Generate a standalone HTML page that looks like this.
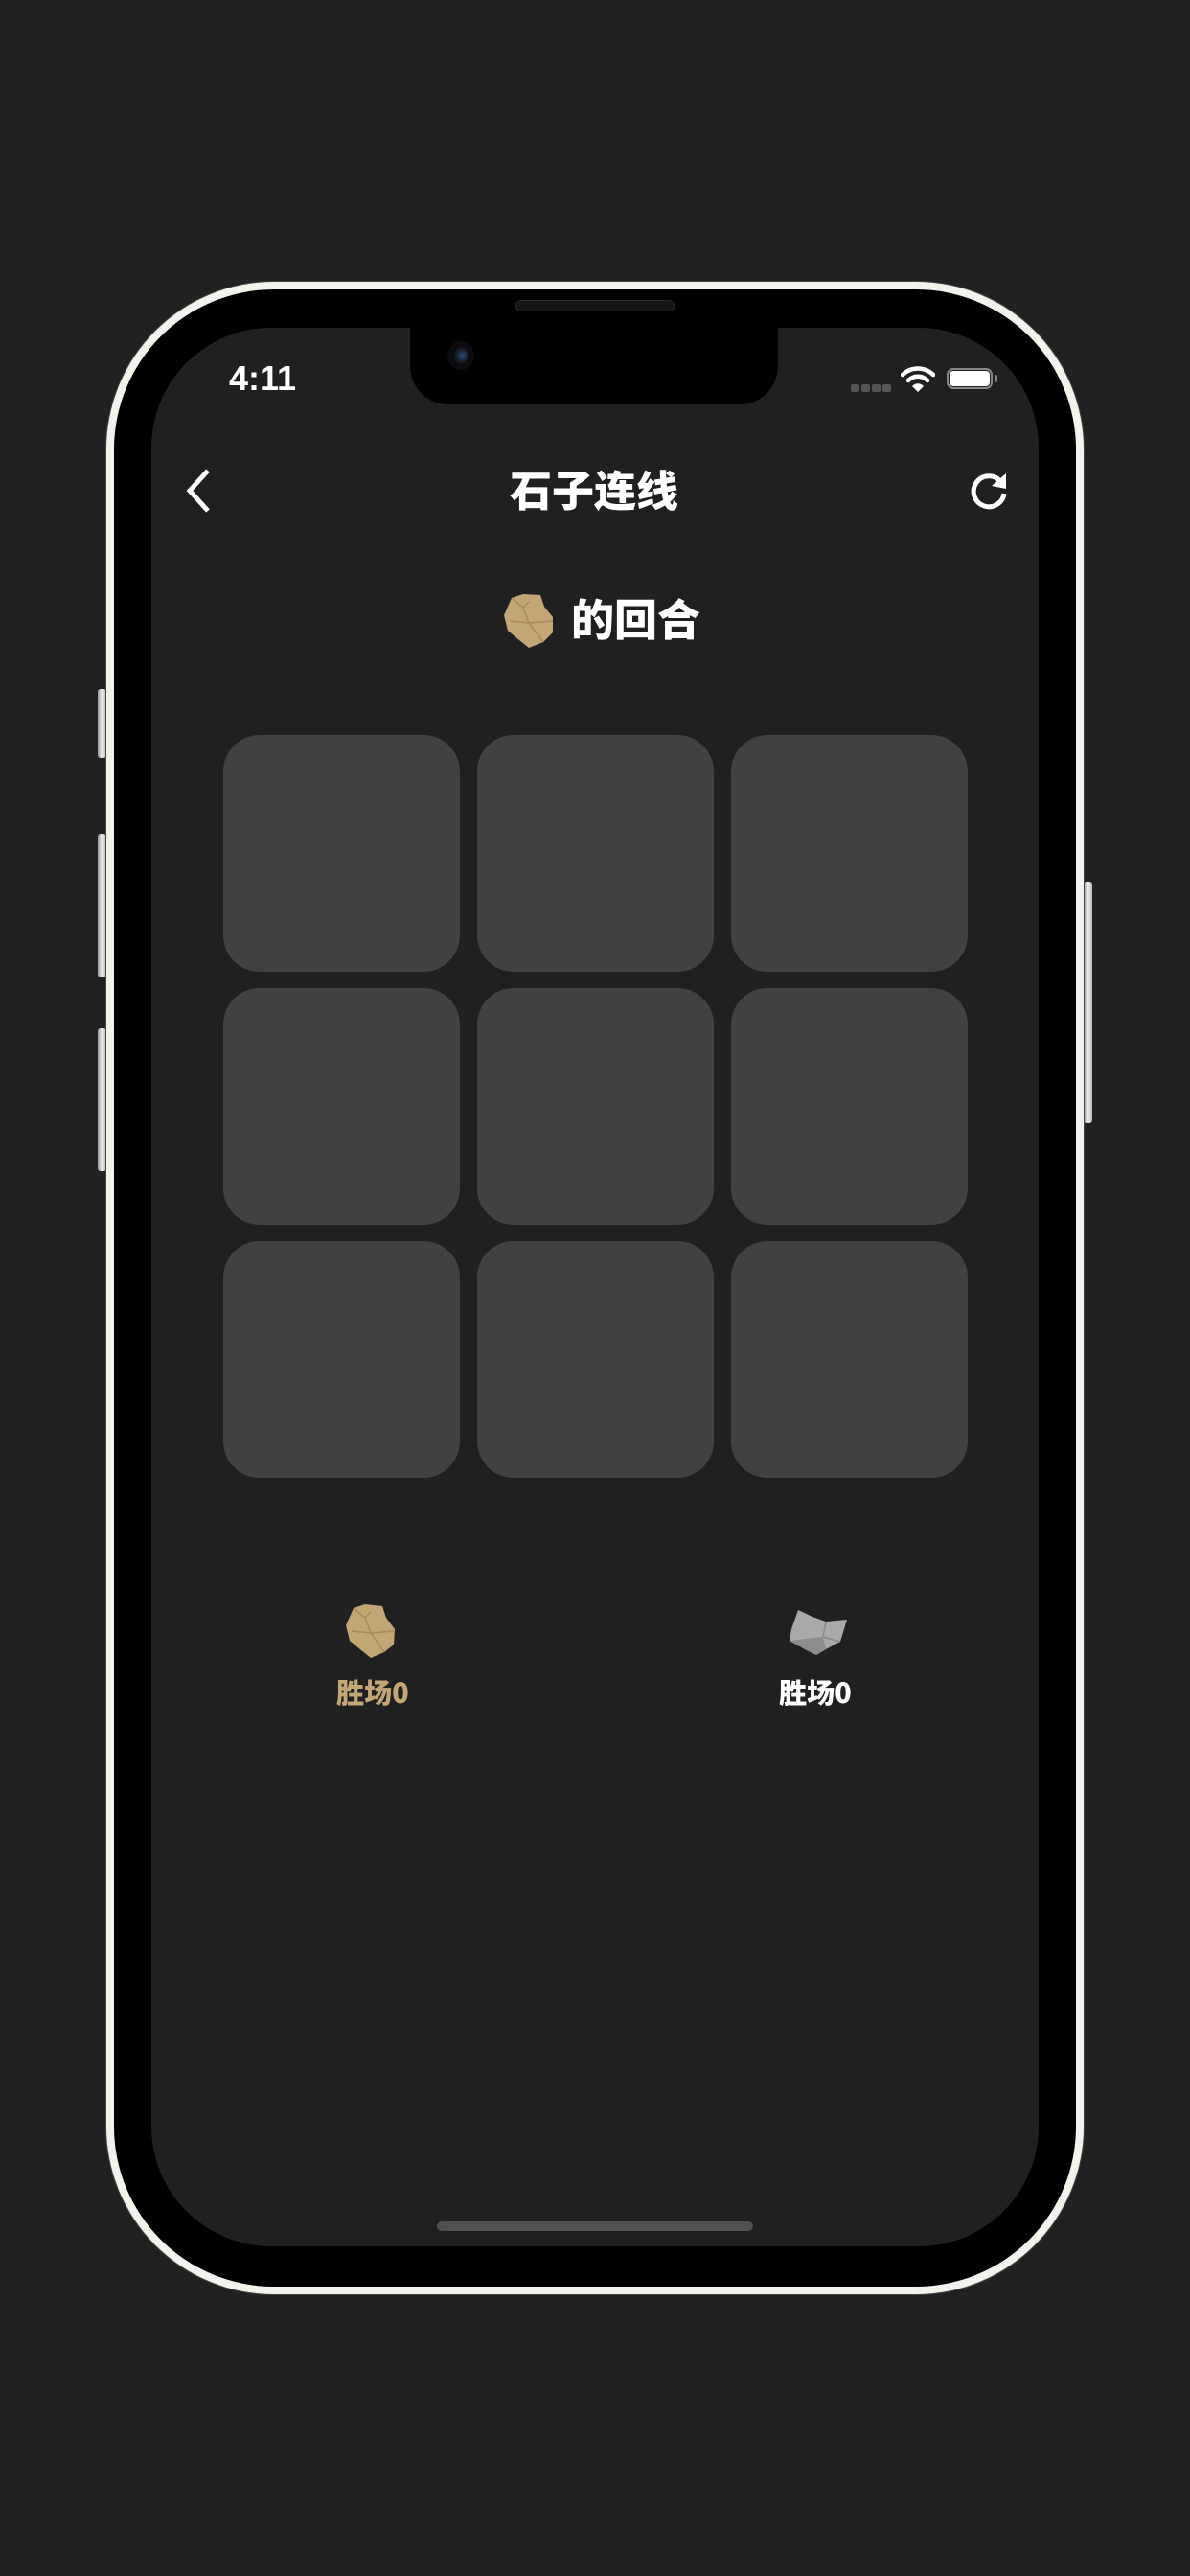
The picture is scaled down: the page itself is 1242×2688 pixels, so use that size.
<!DOCTYPE html>
<html><head><meta charset="utf-8"><style>
html,body{margin:0;padding:0}
body{width:1242px;height:2688px;background:#212121;position:relative;overflow:hidden;font-family:"Liberation Sans","Noto Sans CJK SC",sans-serif}
.abs{position:absolute}
.frame{left:111px;top:294px;width:1020px;height:2100px;border-radius:175px;background:#f4f2ec;box-shadow:0 0 0 1px #444}
.bezel{left:119px;top:302px;width:1004px;height:2084px;border-radius:167px;background:#000}
.screen{left:158px;top:342px;width:926px;height:2002px;border-radius:125px;background:#202020;overflow:hidden}
.notch{left:428px;top:330px;width:384px;height:92px;background:#000;border-radius:0 0 40px 40px}
.speaker{left:538px;top:313px;width:164px;height:10px;border-radius:5px;background:#151515;border:1px solid #262626}
.btn{background:linear-gradient(90deg,#9a9a9a,#eee,#bbb);border-radius:3px}
.cell{position:absolute;width:247px;height:247px;border-radius:38px;background:#414141}
.cjk{font-family:"Noto Sans CJK SC","WenQuanYi Zen Hei",sans-serif;font-weight:900}
</style></head><body>
<div class="abs btn" style="left:102px;top:719px;width:9px;height:72px"></div>
<div class="abs btn" style="left:102px;top:870px;width:9px;height:150px"></div>
<div class="abs btn" style="left:102px;top:1073px;width:9px;height:149px"></div>
<div class="abs btn" style="left:1131px;top:920px;width:9px;height:252px"></div>
<div class="abs frame"></div>
<div class="abs bezel"></div>
<div class="abs screen"></div>
<div class="abs notch"></div>
<div class="abs speaker"></div>
<div class="abs" style="left:467px;top:356px;width:28px;height:30px;border-radius:50%;background:#0c0c10"></div>
<div class="abs" style="left:474px;top:362px;width:14px;height:18px;border-radius:50%;background:radial-gradient(circle at 60% 50%,#2a4a7a,#111 70%)"></div>

<div class="abs" style="left:239px;top:374px;font-size:36px;color:#fff;font-weight:bold">4:11</div>
<div class="abs" style="left:888px;top:401px;width:9px;height:8px;border-radius:2px;background:#555;box-shadow:11px 0 #555,22px 0 #555,33px 0 #555"></div>
<svg class="abs" style="left:940px;top:381px" width="36" height="30" viewBox="0 0 36 30"><path d="M2 10 A23 23 0 0 1 34 10" stroke="#fff" stroke-width="4.5" fill="none" stroke-linecap="round"/><path d="M8 16 A14 14 0 0 1 28 16" stroke="#fff" stroke-width="4.5" fill="none" stroke-linecap="round"/><path d="M12 22 L18 28 L24 22 A8 8 0 0 0 12 22Z" fill="#fff"/></svg>
<div class="abs" style="left:988px;top:384px;width:48px;height:22px;border:2px solid #888;border-radius:7px;box-sizing:border-box"></div>
<div class="abs" style="left:991px;top:387px;width:42px;height:16px;border-radius:4px;background:#fff"></div>
<div class="abs" style="left:1038px;top:391px;width:3px;height:8px;border-radius:0 2px 2px 0;background:#888"></div>

<svg class="abs" style="left:190px;top:486px" width="34" height="52" viewBox="0 0 34 52"><path d="M27 5 L8 26 L27 47" stroke="#fff" stroke-width="5" fill="none"/></svg>
<div class="abs cjk" style="left:500px;top:478px;width:240px;text-align:center;font-size:44px;line-height:62px;color:#fff">石子连线</div>
<svg class="abs" style="left:1008px;top:488px" width="48" height="48" viewBox="0 0 48 48"><path d="M36 14 A16 16 0 1 0 40 27" stroke="#fff" stroke-width="5" fill="none"/><path d="M42 6 L42 22 L27 19 Z" fill="#fff"/></svg>

<svg class="abs" style="left:522px;top:618px" width="60" height="60" viewBox="0 0 60 60"><path d="M12 6 L24 2 L42 3 L46 15 L55 26 L55 42 L45 52 L30 58 L20 50 L8 40 L4 24 Z" fill="#c4a574"/><path d="M12 6 L24 16 L30 10 M24 16 L30 32 L45 52 M30 32 L55 30 M10 30 L30 32" stroke="#a88a5c" stroke-width="1.5" fill="none"/></svg>
<div class="abs cjk" style="left:596px;top:612px;font-size:45px;line-height:64px;color:#fff">的回合</div>

<div class="cell" style="left:233px;top:767px"></div><div class="cell" style="left:498px;top:767px"></div><div class="cell" style="left:763px;top:767px"></div>
<div class="cell" style="left:233px;top:1031px"></div><div class="cell" style="left:498px;top:1031px"></div><div class="cell" style="left:763px;top:1031px"></div>
<div class="cell" style="left:233px;top:1295px"></div><div class="cell" style="left:498px;top:1295px"></div><div class="cell" style="left:763px;top:1295px"></div>

<svg class="abs" style="left:356px;top:1674px" width="62" height="58" viewBox="0 0 60 58"><path d="M12 4 L24 0 L42 2 L46 14 L55 26 L54 42 L44 50 L30 56 L20 48 L8 38 L4 22 Z" fill="#c4a574"/><path d="M12 4 L24 14 L30 8 M24 14 L30 30 L44 50 M30 30 L54 28 M10 28 L30 30" stroke="#a88a5c" stroke-width="1.5" fill="none"/></svg>
<div class="abs cjk" style="left:330px;top:1744px;width:118px;text-align:center;font-size:29px;line-height:42px;color:#c4a574">胜场0</div>

<svg class="abs" style="left:820px;top:1676px" width="66" height="56" viewBox="820 1676 66 56"><path d="M833 1680 L848 1687 L862 1692 L884 1690 L877 1713 L862 1721 L852 1727 L840 1721 L824 1712 L826 1700 Z" fill="#a9a9a9"/><path d="M862 1692 L859 1708 L877 1713 M859 1708 L840 1721" stroke="#8a8a8a" stroke-width="1.5" fill="none"/><path d="M824 1712 L840 1721 L852 1727 L862 1721 L859 1708 Z" fill="#8d8d8d"/></svg>
<div class="abs cjk" style="left:792px;top:1744px;width:118px;text-align:center;font-size:29px;line-height:42px;color:#fff">胜场0</div>

<div class="abs" style="left:456px;top:2318px;width:330px;height:10px;border-radius:5px;background:#505050"></div>
</body></html>
